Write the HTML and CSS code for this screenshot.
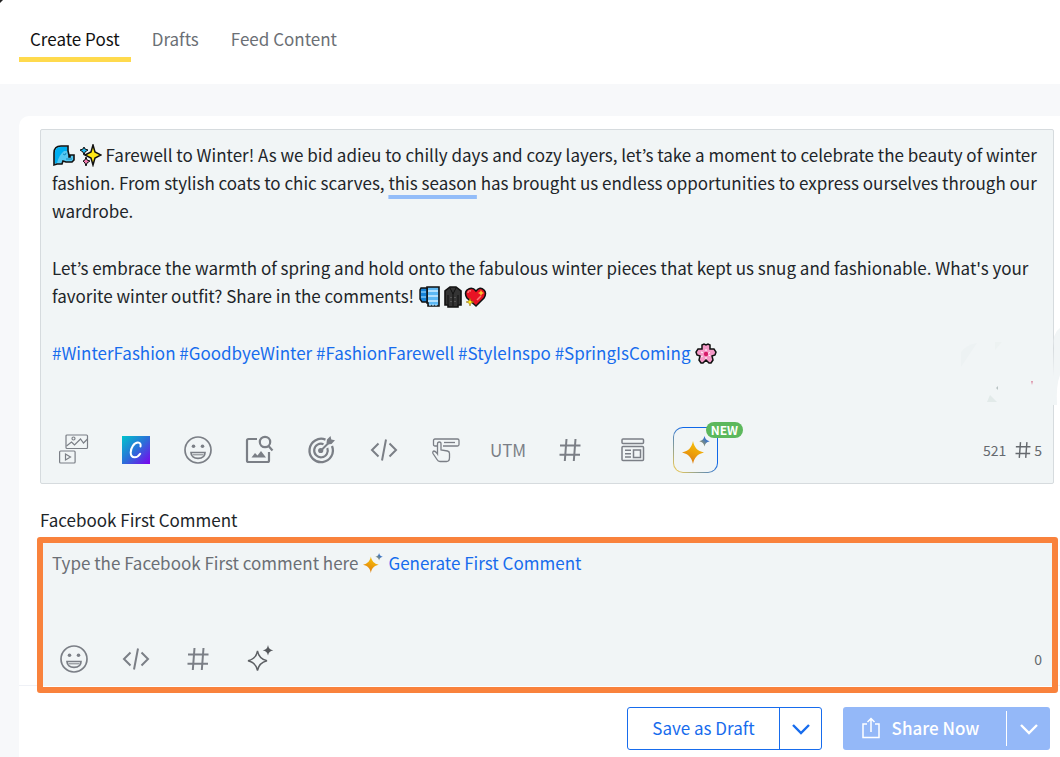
FILE: index.html
```html
<!DOCTYPE html>
<html lang="en">
<head>
    <meta charset="UTF-8">
    <meta name="viewport" content="width=device-width, initial-scale=1.0">
    <title>Create Post</title>
    <link rel="stylesheet" href="styles.css">
</head>
<body>
    <!-- Shared icons -->
    <svg class="defs" aria-hidden="true">
        <defs>
            <linearGradient id="gold" x1="0.7" y1="0" x2="0.3" y2="1">
                <stop offset="0" stop-color="#f6c40c"/>
                <stop offset="0.5" stop-color="#eda10a"/>
                <stop offset="1" stop-color="#d9781a"/>
            </linearGradient>
            <linearGradient id="blue" x1="1" y1="0" x2="0" y2="1">
                <stop offset="0.3" stop-color="#2f6fd0"/>
                <stop offset="1" stop-color="#c8a93c"/>
            </linearGradient>
            <linearGradient id="canva" x1="0" y1="0" x2="1" y2="1">
                <stop offset="0" stop-color="#00c4cc"/>
                <stop offset="0.5" stop-color="#2b6fd8"/>
                <stop offset="1" stop-color="#7d00ef"/>
            </linearGradient>
        </defs>
        <symbol id="smile" viewBox="0 0 28 28">
            <g fill="none" stroke="currentColor" stroke-width="1.700">
                <circle cx="14" cy="14" r="13"/>
                <path d="M7 16.500h14c0 3.800-3 5.800-7 5.800s-7-2-7-5.800z"/>
                <path d="M8.500 18.800h11" stroke-width="1"/>
            </g>
            <circle cx="9.500" cy="10.200" r="1.800" fill="currentColor"/>
            <circle cx="18.500" cy="10.200" r="1.800" fill="currentColor"/>
        </symbol>
        <symbol id="code" viewBox="0 0 28 28">
            <path d="M8.500 7.500L2 14l6.500 6.500M19.500 7.500L26 14l-6.500 6.500M16 3.500l-4 21" fill="none" stroke="currentColor" stroke-width="2"/>
        </symbol>
        <symbol id="hash" viewBox="0 0 28 28">
            <path d="M10.500 3L8.800 25M19.500 3l-1.700 22M4 9.500h20.500M3.500 18.800H24" fill="none" stroke="currentColor" stroke-width="2"/>
        </symbol>
        <symbol id="sparkle" viewBox="0 0 28 28">
            <path d="M11 6c1.200 6.500 4.500 10 11 11.500-6.500 1.500-9.800 5-11 11.500C9.800 22.500 6.500 19 0 17.500 6.500 16 9.800 12.500 11 6z" transform="translate(0 -1)" fill="url(#gold)"/>
            <path d="M22.500 0c.7 3.200 2 4.600 5.200 5.200-3.200.7-4.500 2-5.200 5.300-.7-3.300-2-4.600-5.200-5.300 3.200-.6 4.500-2 5.200-5.200z" fill="url(#blue)"/>
        </symbol>
    </svg>

    <header class="header">
        <nav class="tabs">
            <a class="tab active" href="#create">Create Post</a>
            <a class="tab" href="#drafts">Drafts</a>
            <a class="tab" href="#feed">Feed Content</a>
        </nav>
        <svg class="corner" viewBox="0 0 3 3" aria-hidden="true"><path d="M0 0h3L0 3z" fill="#222"/></svg>
    </header>

    <main class="panel">
        <div class="fields">
            <!-- Post composer -->
            <section class="composer">
                <div class="editor" contenteditable="true" spellcheck="false" role="textbox" aria-multiline="true" aria-label="Post text">
                    <p><svg class="emoji" viewBox="0 0 23 23">
                            <path d="M2 21V9q0-7 7-7h7v5l1 4v2h1v-2h4v5l-2 2h-6l-3-1-1 3H5z" fill="#55c8f2" stroke="#111" stroke-width="1.600"/>
                            <path d="M3 19V9q0-6 6-6h6v4h-3q-5 4-7 12z" fill="#00aef0"/>
                            <path d="M11 10l2 1 1-2M14 15h6" fill="none" stroke="#168aba"/>
                        </svg> <svg class="emoji" viewBox="0 0 23 23">
                            <path d="M5 3l1 2 3 1-3 2-1 3-1-3-3-2 3-1z" fill="#20b9ef" stroke="#111"/>
                            <path d="M7 13l1 3 3 1-3 2-1 3-1-3-2-2 2-1z" fill="#f07bb0" stroke="#111"/>
                            <path d="M14 1l2 7 6 3-6 3-2 7-2-7-6-3 6-3z" fill="#ffe817" stroke="#111" stroke-width="1.500"/>
                        </svg> Farewell to Winter! As we bid adieu to chilly days and cozy layers, let’s take a moment to celebrate the beauty of winter fashion. From stylish coats to chic scarves, <span class="suggestion">this season</span> has brought us endless opportunities to express ourselves through our wardrobe.</p>
                    <p>Let’s embrace the warmth of spring and hold onto the fabulous winter pieces that kept us snug and fashionable. What's your favorite winter outfit? Share in the comments! <svg class="emoji" viewBox="0 0 23 23">
                            <path d="M9 2h12v19H10v-3H9z" fill="#5db8f3" stroke="#111" stroke-width="1.600"/>
                            <path d="M10 6h10M10 11h10M10 16h10" stroke="#b4e0fc" stroke-width="2"/>
                            <path d="M3 3h6v14H4l-2-3V5z" fill="#1683d8" stroke="#111" stroke-width="1.400"/>
                            <path d="M3 7h5M3 12h5" stroke="#7cc6f7" stroke-width="1.500"/>
                            <path d="M12 19v2M15 19v2M18 19v2" stroke="#cbeaff"/>
                        </svg><svg class="emoji" viewBox="0 0 23 23">
                            <path d="M9 2h6l5 4v14h-3v2H7v-2H4V6z" fill="#343434" stroke="#111" stroke-width="1.600"/>
                            <path d="M9 3l3 6 3-6M12 9v12M7 10v9M17 10v9" fill="none" stroke="#111"/>
                            <path d="M10 12v1M14 12v1M10 16v1M14 16v1" stroke="#777"/>
                        </svg><svg class="emoji" viewBox="0 0 23 23">
                            <path d="M12 21L3 13q-3-5 0-8 5-4 9 1 4-5 8-1 3 3 0 8z" fill="#e81224" stroke="#111" stroke-width="1.500"/>
                            <path d="M4 8q0-3 3-2M13 15l4-4" fill="none" stroke="#ff7777" stroke-width="1.500"/>
                            <path d="M6 13l1 3 3 1-3 1-1 3-1-3-3-1 3-1z" fill="#ffe817" stroke="#8d5d00" stroke-width="0.500"/>
                            <path d="M17 5l1 2 2 1-2 1-1 2-1-2-2-1 2-1z" fill="#ffc02e"/>
                        </svg></p>
                    <p><a href="#WinterFashion">#WinterFashion</a> <a href="#GoodbyeWinter">#GoodbyeWinter</a> <a href="#FashionFarewell">#FashionFarewell</a> <a href="#StyleInspo">#StyleInspo</a> <a href="#SpringIsComing">#SpringIsComing</a> <svg class="emoji" viewBox="0 0 23 23">
                            <path d="M8 7V3l2-1 2 1 2-1 2 1v4h4l2 3-1 3-3 1 1 4-2 3h-2l-3-3-3 3H7l-2-3 1-4-3-1-1-3 2-3z" fill="#f59ac8" stroke="#111" stroke-width="1.500"/>
                            <path d="M12 7v10M7 10l10 4M7 15l10-5" stroke="#fff" stroke-dasharray="2 2"/>
                            <circle cx="12" cy="12" r="2.200" fill="#d61b68"/>
                        </svg></p>
                </div>

                <div class="toolbar">
                    <button class="tool" type="button" aria-label="Add media">
                        <svg viewBox="0 0 28 28" fill="none" stroke="currentColor" stroke-width="1.200">
                            <rect x="6" y="-1" width="21.500" height="13.500" rx="1"/>
                            <path d="M6.500 10l5-4 3 3 6-6 3 4 4-4"/>
                            <circle cx="13.500" cy="2.500" r="1.500"/>
                            <rect x="-.4" y="15" width="15.500" height="12" rx="1"/>
                            <path d="M5.500 18v6l5-3z"/>
                        </svg>
                    </button>
                    <button class="tool" type="button" aria-label="Canva">
                        <svg viewBox="0 0 28 28">
                            <rect width="28" height="28" fill="url(#canva)"/>
                            <path d="M18.500 10.500c.6-2.500-.6-4-2.500-4-4 0-7.300 5.500-7.300 10 0 3 1.500 4.800 4 4.800 2.200 0 4.200-1.500 5.500-3.500" fill="none" stroke="#fff" stroke-width="2" stroke-linecap="round"/>
                        </svg>
                    </button>
                    <button class="tool" type="button" aria-label="Emoji"><svg><use href="#smile"/></svg></button>
                    <button class="tool" type="button" aria-label="Search images">
                        <svg viewBox="0 0 28 28" fill="none" stroke="currentColor" stroke-width="2.200">
                            <path d="M11 3H2.500Q1 3 1 4.500v20Q1 26 2.500 26h19q1.500 0 1.500-1.500V16"/>
                            <circle cx="19" cy="6" r="5.200"/>
                            <path d="M22.500 10l4 4.500"/>
                            <path d="M5.500 21.500L9 17l2.500 2.500L15 15l5 6.500z" fill="currentColor" stroke="none"/>
                        </svg>
                    </button>
                    <button class="tool" type="button" aria-label="Audience targeting">
                        <svg viewBox="0 0 28 28" fill="none" stroke="currentColor">
                            <path d="M17.500 3.600A11.700 11.700 0 1 0 24 10" stroke-width="2.300"/>
                            <path d="M15.500 8.200A6.800 6.800 0 1 0 19.300 12" stroke-width="2.200"/>
                            <circle cx="12.700" cy="14.500" r="2.600" fill="currentColor" stroke="none"/>
                            <path d="M13 14.500L21.500 6" stroke-width="1.900"/>
                            <path d="M18.500 7l.5-3.500L22.500 0l.8 3.500 3.700.8L23.500 8l-4 .5z" fill="currentColor" stroke="none"/>
                        </svg>
                    </button>
                    <button class="tool" type="button" aria-label="Code"><svg><use href="#code"/></svg></button>
                    <button class="tool" type="button" aria-label="Call to action">
                        <svg viewBox="0 0 28 28" fill="none" stroke="currentColor" stroke-width="1.300">
                            <path d="M5.500 10H3Q1.500 10 1.500 8.500v-4Q1.500 3 3 3h22.500Q27 3 27 4.500v4Q27 10 25.500 10H11"/>
                            <path d="M12 6.500h11"/>
                            <path d="M5.500 18V8q0-2 1.800-2T9 8v6l6.500 1q2 .5 2 2.500v4q0 4-3 4H8q-2 0-3-2l-4-6q-.8-2 1-2.500 1.500 0 3.500 3z" fill="#f1f5f6"/>
                        </svg>
                    </button>
                    <button class="tool" type="button">UTM</button>
                    <button class="tool" type="button" aria-label="Hashtags"><svg><use href="#hash"/></svg></button>
                    <button class="tool" type="button" aria-label="Templates">
                        <svg viewBox="0 0 28 28" fill="none" stroke="currentColor" stroke-width="1.500">
                            <rect x="4" y="3" width="21.500" height="4.500" rx="1"/>
                            <rect x="4" y="10.500" width="21.500" height="14" rx="1"/>
                            <path d="M7 14.300h6M7 17.700h6M7 21h6"/>
                            <rect x="15.500" y="14" width="7" height="7.500"/>
                        </svg>
                    </button>
                    <button class="tool ai" type="button" aria-label="AI assistant">
                        <svg><use href="#sparkle"/></svg>
                        <span class="badge">NEW</span>
                    </button>
                    <div class="counter">
                        <span>521</span>
                        <span class="tag-count"><svg><use href="#hash"/></svg>5</span>
                    </div>
                </div>
                <svg class="smudge" viewBox="0 0 100 80" aria-hidden="true">
                    <path d="M100 0q-8 5-6 20l-2 57h5q-1-20 3-30z" fill="#f1f5f6"/>
                    <path d="M1 24q5-7 16-9L1 39z" fill="#edf2f3"/>
                    <path d="M35 14h7l-7 8z" fill="#edf2f2"/>
                    <path d="M27 74l3-7 7 7z" fill="#e2eae9"/>
                    <path d="M36 60l2-2v4z" fill="#b9c3c3"/>
                    <path d="M71 53h2l-1 4z" fill="#dc91a8"/>
                </svg>
            </section>

            <!-- First comment -->
            <label class="field-label" for="firstComment">Facebook First Comment</label>
            <section class="comment-box">
                <div class="comment-input">
                    <textarea id="firstComment" rows="3"></textarea>
                    <div class="hint">
                        <span>Type the Facebook First comment here</span>
                        <svg><use href="#sparkle"/></svg>
                        <a href="#generate">Generate First Comment</a>
                    </div>
                </div>
                <div class="toolbar">
                    <button class="tool" type="button" aria-label="Emoji"><svg><use href="#smile"/></svg></button>
                    <button class="tool" type="button" aria-label="Code"><svg><use href="#code"/></svg></button>
                    <button class="tool" type="button" aria-label="Hashtags"><svg><use href="#hash"/></svg></button>
                    <button class="tool" type="button" aria-label="Generate comment">
                        <svg viewBox="0 0 28 28">
                            <path d="M11.500 6c1 5.500 4 8.500 9.500 9.700-5.500 1.300-8.500 4.300-9.500 9.800-1-5.500-4-8.500-9.500-9.800 5.500-1.200 8.500-4.200 9.500-9.700z" fill="none" stroke="#5d6064" stroke-width="1.400"/>
                            <path d="M22 0c.6 3.300 2 4.700 5.300 5.300-3.300.7-4.700 2-5.300 5.300-.6-3.300-2-4.600-5.300-5.300 3.300-.6 4.700-2 5.300-5.300z" fill="#55585c"/>
                        </svg>
                    </button>
                    <div class="counter"><span>0</span></div>
                </div>
            </section>
        </div>

        <footer class="actions">
            <div class="split outline">
                <button class="main" type="button">Save as Draft</button>
                <button class="more" type="button" aria-label="More draft options">
                    <svg viewBox="0 0 18 18"><path d="M1 5l8 8 8-8" fill="none" stroke="currentColor" stroke-width="2.400"/></svg>
                </button>
            </div>
            <div class="split filled">
                <button class="main" type="button">
                    <svg viewBox="0 0 18 22" fill="none" stroke="currentColor" stroke-width="1.500">
                        <path d="M5 7H1v13.500h16V7h-4M9 15V2M5.500 5L9 1.500 12.500 5"/>
                    </svg>
                    Share Now
                </button>
                <button class="more" type="button" aria-label="More share options">
                    <svg viewBox="0 0 18 18"><path d="M1 5l8 8 8-8" fill="none" stroke="currentColor" stroke-width="2.400"/></svg>
                </button>
            </div>
        </footer>
    </main>
</body>
</html>
```

FILE: styles.css
```css
:root {
    --bg-page: #f7f8fa;
    --bg-field: #f1f5f6;
    --text-primary: #212529;
    --text-secondary: #6b6f75;
    --icon: #7b7f86;
    --accent-blue: #176ced;
    --accent-yellow: #ffda4d;
    --accent-orange: #f9823c;
    --accent-green: #5cb85c;
    --border: #d6dbde;
}

* {
    margin: 0;
    padding: 0;
    box-sizing: border-box;
}

body {
    font-family: 'Noto Sans CJK KR', 'Noto Sans', sans-serif;
    font-size: 17px;
    line-height: 28px;
    background: var(--bg-page);
    color: var(--text-primary);
    min-height: 100vh;
    display: flex;
    flex-direction: column;
}

a {
    color: var(--accent-blue);
    text-decoration: none;
}

button {
    font: inherit;
    color: inherit;
    background: none;
    border: none;
    cursor: pointer;
}

.defs {
    position: absolute;
    width: 0;
    height: 0;
}

/* Header */
.header {
    background: #fff;
    padding: 22px 19px;
    margin-bottom: 32px;
}

.corner {
    position: absolute;
    top: 0;
    left: 0;
    width: 3px;
    height: 3px;
}

.tabs {
    display: flex;
    gap: 10px;
}

.tab {
    color: var(--text-secondary);
    padding: 3px 11px 4px;
    border-bottom: 5px solid transparent;
}

.tab.active {
    color: #111;
    border-color: var(--accent-yellow);
}

/* Panel */
.panel {
    flex: 1;
    margin-left: 19px;
    background: #fff;
    border-top-left-radius: 10px;
}

.fields {
    padding: 13px 6px 0 21px;
}

.composer {
    position: relative;
    background: var(--bg-field);
    border: 1px solid var(--border);
    border-radius: 2px;
    padding-bottom: 5px;
}

.editor {
    min-height: 292px;
    padding: 11px;
    outline: none;
}

.editor p + p {
    margin-top: 29px;
}

.emoji {
    width: 23px;
    height: 23px;
    vertical-align: -5px;
}

.suggestion {
    text-decoration: underline 4px #93bdf9;
    text-underline-offset: 5px;
    text-decoration-skip-ink: none;
}

.toolbar {
    display: flex;
    align-items: center;
    gap: 34px;
    height: 56px;
    padding: 0 11px 0 19px;
    color: var(--icon);
}

.tool {
    display: flex;
    align-items: center;
    justify-content: center;
    flex: none;
    width: 28px;
    height: 28px;
}

.tool svg {
    flex: none;
    width: 28px;
    height: 28px;
    overflow: visible;
}

.tool.ai {
    position: relative;
    width: 45px;
    height: 46px;
    margin-left: -7px;
    border: 1px solid transparent;
    border-radius: 10px;
    background: linear-gradient(var(--bg-field), var(--bg-field)) padding-box,
                linear-gradient(45deg, #ffd24a, #1068e8 60%) border-box;
}

.badge {
    position: absolute;
    top: -6px;
    right: -26px;
    padding: 0 5px;
    border-radius: 8px;
    background: var(--accent-green);
    color: #fff;
    font-size: 12px;
    font-weight: 700;
    line-height: 16px;
}

.counter {
    display: flex;
    gap: 7px;
    margin-left: auto;
    font-size: 14px;
    color: #65696e;
}

.tag-count {
    display: flex;
    align-items: center;
    gap: 1px;
}

.tag-count svg {
    width: 20px;
    height: 20px;
}

.smudge {
    position: absolute;
    right: -7px;
    top: 198px;
    width: 100px;
    height: 80px;
    pointer-events: none;
}

.field-label {
    display: block;
    margin: 22px 0 3px;
}

/* First comment */
.comment-box {
    position: relative;
    margin: 0 -4px 0 -3px;
    background: var(--bg-field);
    border: 6px solid var(--accent-orange);
    border-radius: 3px;
    box-shadow: inset 0 -1px #fff;
}

.comment-input {
    display: grid;
}

.comment-input textarea,
.hint {
    grid-area: 1 / 1;
    padding: 6px 9px 0;
}

.comment-input textarea {
    width: 100%;
    height: 88px;
    font: inherit;
    color: inherit;
    background: none;
    border: none;
    outline: none;
    resize: none;
}

.hint {
    display: flex;
    gap: 5px;
    align-self: start;
    justify-self: start;
    color: var(--text-secondary);
}

.hint svg {
    width: 20px;
    height: 20px;
    align-self: center;
}

.comment-box .toolbar {
    padding: 0 10px 0 17px;
}

/* Footer */
.actions {
    display: flex;
    justify-content: flex-end;
    gap: 21px;
    margin-top: -8px;
    padding: 21px 10px 7px;
    border-top: 1px solid #eff1f6;
}

.split {
    display: flex;
    height: 43px;
    border-radius: 3px;
}

.split .main {
    display: flex;
    align-items: center;
    justify-content: center;
    gap: 12px;
    padding-bottom: 1px;
}

.split .more {
    display: flex;
    align-items: center;
    justify-content: center;
    width: 41px;
}

.more svg {
    width: 18px;
    height: 18px;
}

.outline {
    border: 1px solid var(--accent-blue);
    color: var(--accent-blue);
}

.outline .main {
    width: 152px;
    border-right: 1px solid var(--accent-blue);
}

.filled {
    align-items: center;
    background: #94b8f8;
    color: #fff;
}

.filled .main {
    width: 163px;
    padding-right: 8px;
    font-weight: 500;
}

.filled .main svg {
    width: 18px;
    height: 22px;
}

.split.filled .more {
    width: 44px;
    height: 35px;
    border-left: 1px solid #fff;
}
```
